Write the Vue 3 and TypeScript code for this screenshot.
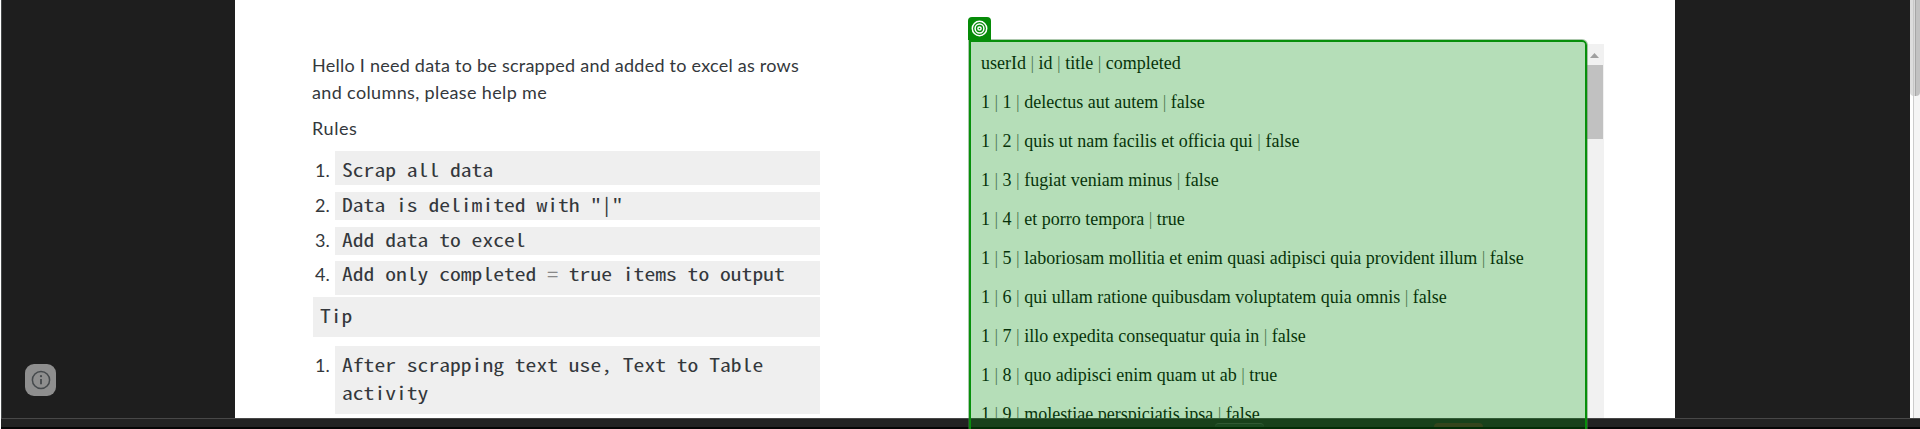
<script setup lang="ts">
const intro: string[] = [
  'Hello I need data to be scrapped and added to excel as rows',
  'and columns, please help me',
]

const rules: string[] = [
  'Scrap all data',
  'Data is delimited with "|"',
  'Add data to excel',
  'Add only completed = true items to output',
]

const rows: string[][] = [
  ['userId', 'id', 'title', 'completed'],
  ['1', '1', 'delectus aut autem', 'false'],
  ['1', '2', 'quis ut nam facilis et officia qui', 'false'],
  ['1', '3', 'fugiat veniam minus', 'false'],
  ['1', '4', 'et porro tempora', 'true'],
  ['1', '5', 'laboriosam mollitia et enim quasi adipisci quia provident illum', 'false'],
  ['1', '6', 'qui ullam ratione quibusdam voluptatem quia omnis', 'false'],
  ['1', '7', 'illo expedita consequatur quia in', 'false'],
  ['1', '8', 'quo adipisci enim quam ut ab', 'true'],
  ['1', '9', 'molestiae perspiciatis ipsa', 'false'],
]
</script>

<template>
  <div class="screen">
    <div class="body">
      <aside class="side">
        <div class="info">
          <svg width="20" height="20" viewBox="0 0 20 20">
            <circle cx="10" cy="10" r="8.6" fill="none" stroke="#45494c" stroke-width="1.5" />
            <path d="M10 9v5.2" stroke="#45494c" stroke-width="1.8" />
            <circle cx="10" cy="6.2" r="1.1" fill="#45494c" />
          </svg>
        </div>
      </aside>
      <main class="page">
        <section class="notes">
          <p class="intro">
            <span v-for="l in intro" :key="l" class="line">{{ l }}</span>
          </p>
          <p class="heading">Rules</p>
          <ol class="list">
            <li v-for="(r, i) in rules" :key="r" class="item">
              <span class="num">{{ i + 1 }}.</span>
              <div class="code">
                <span v-if="r.includes(' = ')" class="mono">{{ r.split(' = ')[0] }} <span class="op">=</span> {{ r.split(' = ')[1] }}</span>
                <span v-else class="mono">{{ r }}</span>
              </div>
            </li>
          </ol>
          <div class="code tip"><span class="mono">Tip</span></div>
          <div class="item">
            <span class="num">1.</span>
            <div class="code"><span class="mono">After scrapping text use, Text to Table<br />activity</span></div>
          </div>
        </section>
        <section class="data">
          <div class="rows">
            <div v-for="(r, i) in rows" :key="i" class="row"><template v-for="(c, j) in r" :key="j"><span v-if="j" class="pipe"> | </span>{{ c }}</template></div>
          </div>
          <div class="scroll">
            <svg class="arrow" width="17" height="21" viewBox="0 0 17 21"><path d="M3 14h9L7.500 9z" fill="#a0a0a0" /></svg>
            <div class="thumb"></div>
          </div>
        </section>
      </main>
      <aside class="side right"></aside>
      <div class="pagebar"><div class="pagethumb"></div></div>
    </div>
    <footer class="taskbar">
      <span class="tab"></span>
      <span class="tab warm"></span>
    </footer>
    <div class="target">
      <div class="badge">
        <svg width="17" height="17" viewBox="0 0 17 17" fill="none" stroke="#fff" stroke-width="1.5">
          <circle cx="8.500" cy="8.500" r="7.2" />
          <circle cx="8.500" cy="8.500" r="4.4" />
          <circle cx="8.500" cy="8.500" r="1.6" />
        </svg>
      </div>
    </div>
  </div>
</template>

<style>
body { background: #fff; overflow: hidden; }
</style>

<style scoped>
* { box-sizing: border-box; }
.screen { position: relative; width: 1920px; height: 429px; overflow: hidden; display: flex; flex-direction: column; background: #fff; }
.body { display: flex; height: 418px; overflow: hidden; }
.side { width: 235px; flex: none; background: #1e1e1e; border-left: 1px solid #fff; box-shadow: inset 1px 0 #46494a; padding: 364px 0 0 24px; }
.side.right { border: 0; box-shadow: none; }
.info { width: 31px; height: 32px; border-radius: 9px; background: #8e8e8e; display: flex; align-items: center; justify-content: center; }
.page { width: 1440px; flex: none; display: flex; background: #fff; }
.notes { width: 585px; padding: 52px 0 0 78px; color: #34383c; font: 18px/27px Lato, "Noto Sans", sans-serif; }
p { margin: 0; }
.intro { height: 54px; margin-left: -1px; }
.line { display: block; white-space: nowrap; letter-spacing: .245px; }
.line + .line { letter-spacing: .36px; }
.heading { margin: 9px 0 0 -1px; letter-spacing: .6px; }
.list { list-style: none; margin: 9px 0 0; padding: 0; }
.item { display: flex; margin-bottom: 7px; width: 507px; }
.item:nth-child(3) { margin-bottom: 6px; }
.item:nth-child(4) { margin-bottom: 2px; }
.num { width: 22px; flex: none; padding-left: 2px; line-height: 27px; }
.code { flex: 1; height: 28px; padding-left: 7px; background: #efefef; font: 300 18px/28px "Noto Sans Mono CJK SC", "DejaVu Sans Mono", monospace; white-space: nowrap; }
.mono { display: inline-block; vertical-align: top; margin-top: -2px; transform: scaleX(1.2); transform-origin: 0 0; }
.item:first-child .code { padding-top: 6px; height: 34px; }
.item:first-child .num { padding-top: 6px; }
.item:nth-child(4) .code { height: 34px; }
.op { color: #888; }
.tip { width: 507px; height: 40px; padding-top: 6px; margin-bottom: 9px; }
.notes > .item .code { height: 68px; padding-top: 6px; }
.notes > .item .num { padding-top: 6px; }
.data { width: 636px; margin: 44px 0 0 148px; display: flex; justify-content: space-between; overflow: hidden; }
.rows { padding: 0 0 0 13px; font: 18px/39px "Liberation Serif", serif; color: #0b0b0b; white-space: nowrap; }
.row { height: 39px; }
.pipe { opacity: .6; white-space: pre; }
.scroll { width: 17px; background: #f1f1f1; }
.arrow { display: block; }
.thumb { width: 16px; height: 74px; background: #c1c1c1; }
.pagebar { width: 10px; background: linear-gradient(90deg, #fff 3px, #ccc 3px 4px, #f5f5f5 4px); }
.pagethumb { height: 96px; background: linear-gradient(90deg, #dcdcdc 3px, #c8c8c8 3px 4px, #d8d8d8 4px 5px, #a6a6a6 5px 6px, #c1c1c1 6px); border-radius: 0 0 4px 4px; }
.taskbar { height: 11px; margin-left: 1px; background: #222; border-top: 1px solid #484848; border-bottom: 2px solid #050505; display: flex; padding: 4px 0 0 1214px; gap: 170px; }
.tab { width: 49px; height: 4px; border-radius: 4px 4px 0 0; background: #262c29; border-top: 1px solid #444; }
.tab.warm { background: #4a2824; border: 0; }
.target { position: absolute; left: 969px; top: 40px; width: 618px; height: 420px; border: 2px solid #078f0b; border-radius: 0 5px 0 0; background: rgba(0, 140, 12, .29); background-clip: padding-box; box-shadow: 0 0 0 1px rgba(70, 130, 70, .45); }
.badge { position: absolute; left: -3px; top: -25px; width: 23px; height: 23px; border-radius: 4px 4px 0 0; background: #068b08; display: flex; align-items: center; justify-content: center; }
</style>
